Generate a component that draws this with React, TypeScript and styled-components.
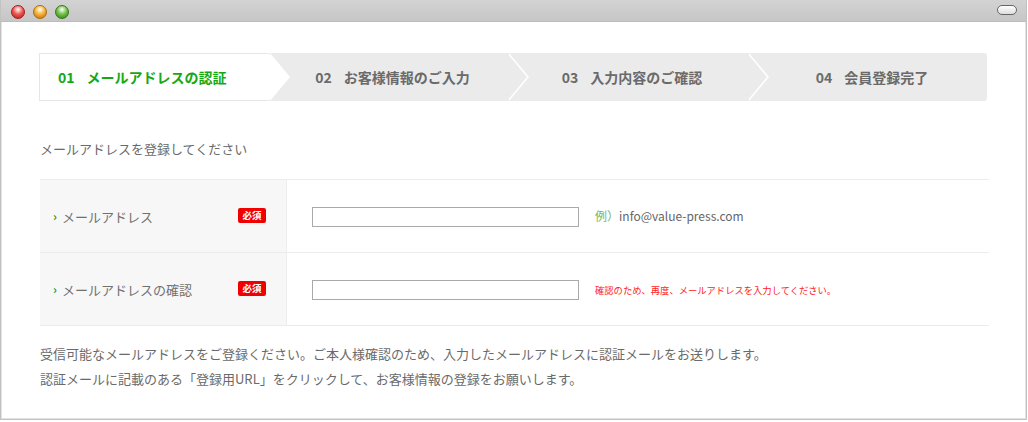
import React from "react";
import styled, { createGlobalStyle } from "styled-components";

const Global = createGlobalStyle`
  html, body { margin: 0; padding: 0; background: #fff; }
  body { font-family: "Noto Sans CJK JP", "Noto Sans", sans-serif; color: #666; }
  * { box-sizing: border-box; }
`;

const Window = styled.div`
  width: 1027px;
  height: 420px;
  border: 1px solid #c2c2c2;
  border-top: none;
  box-shadow: inset 1px 0 0 #e2e2e2, inset -1px 0 0 #e2e2e2, inset 0 -1px 0 #e2e2e2;
  display: flex;
  flex-direction: column;
  background: #fff;
`;

const TitleBar = styled.div`
  height: 22px;
  background: linear-gradient(#d3d3d3, #c6c6c6);
  display: flex;
  align-items: center;
  padding: 0 9px 0 10px;
  gap: 8px;
  border-bottom: 1px solid #bdbdbd;
`;

const Light = styled.span<{ $c: string; $d: string }>`
  width: 14px;
  height: 14px;
  border-radius: 50%;
  background: radial-gradient(circle at 50% 30%, #fff 0, ${(p) => p.$c} 45%, ${(p) => p.$d} 100%);
  border: 1px solid ${(p) => p.$d};
  margin-top: 2px;
`;

const Spacer = styled.div`
  flex: 1;
`;

const Pill = styled.span`
  width: 20px;
  height: 10px;
  border-radius: 5px;
  border: 1px solid #666;
  background: linear-gradient(#fff, #ddd);
  margin-top: -2px;
`;

const Content = styled.div`
  padding: 31px 38px 0 38px;
  display: flex;
  flex-direction: column;
`;

const Steps = styled.div`
  display: flex;
  height: 48px;
  background: #ebebeb;
  border-radius: 0 3px 3px 0;
  width: 948px;
`;

const Step = styled.div<{ $active?: boolean; $w: number; $last?: boolean }>`
  position: relative;
  width: ${(p) => p.$w}px;
  height: 48px;
  display: flex;
  align-items: center;
  justify-content: ${(p) => (p.$active ? "flex-start" : "center")};
  padding-left: ${(p) => (p.$active ? "18px" : "10px")};
  font-size: 14px;
  font-weight: bold;
  color: ${(p) => (p.$active ? "#14a914" : "#6a6a6a")};
  background: ${(p) => (p.$active ? "#fff" : "transparent")};
  border: ${(p) => (p.$active ? "1px solid #e6e6e6" : "none")};
  border-right: none;
  white-space: nowrap;

  &::before,
  &::after {
    content: "";
    display: ${(p) => (p.$last ? "none" : "block")};
    position: absolute;
    top: ${(p) => (p.$active ? "-1px" : "0")};
    height: 48px;
    width: 20px;
    clip-path: polygon(0 0, 100% 50%, 0 100%);
    z-index: 1;
  }
  &::before {
    left: calc(100% + 2px);
    background: #fff;
  }
  &::after {
    left: 100%;
    background: ${(p) => (p.$active ? "#fff" : "#ebebeb")};
  }
`;

const Num = styled.span`
  margin-right: 12px;
`;

const Heading = styled.h2`
  margin: 38px 0 0 1px;
  font-size: 13px;
  font-weight: normal;
  line-height: 20px;
  color: #6a6a6a;
`;

const Table = styled.div`
  margin-top: 20px;
  width: 949px;
  border-top: 1px solid #ececec;
  margin-left: 1px;
`;

const Row = styled.div`
  display: flex;
  height: 73px;
  border-bottom: 1px solid #ececec;
`;

const LabelCell = styled.div`
  width: 247px;
  background: #f7f7f7;
  border-right: 1px solid #ededed;
  display: flex;
  align-items: center;
  padding: 0 20px 0 13px;
  font-size: 13px;
  color: #707070;
`;

const Chev = styled.span`
  color: #1a9c1a;
  font-weight: bold;
  font-size: 12px;
  margin-right: 5px;
  margin-top: -1px;
`;

const LabelText = styled.span`
  flex: 1;
`;

const Badge = styled.span`
  background: #f00000;
  color: #fff;
  font-size: 9.5px;
  font-weight: bold;
  width: 28px;
  height: 15px;
  border-radius: 2px;
  display: flex;
  align-items: center;
  justify-content: center;
  margin-top: -2px;
`;

const FieldCell = styled.div`
  flex: 1;
  display: flex;
  align-items: center;
  padding-left: 25px;
  gap: 16px;
`;

const Input = styled.input`
  width: 267px;
  height: 20px;
  border: 1px solid #a9a9a9;
  background: #fff;
  outline: none;
  margin-top: 1px;
`;

const Example = styled.span`
  font-size: 12px;
  color: #666;
  margin-top: -1px;
`;

const Rei = styled.span`
  color: #7bb35a;
`;

const Warn = styled.span`
  font-size: 9.3px;
  color: #f22;
  margin-top: 1px;
`;

const Notes = styled.p`
  margin: 15px 0 0 1px;
  font-size: 13px;
  line-height: 25px;
  color: #6a6a6a;
`;

export default function App() {
  const steps = [
    { n: "01", t: "メールアドレスの認証", w: 229 },
    { n: "02", t: "お客様情報のご入力", w: 239 },
    { n: "03", t: "入力内容のご確認", w: 240 },
    { n: "04", t: "会員登録完了", w: 240 },
  ];
  return (
    <>
      <Global />
      <Window>
        <TitleBar>
          <Light $c="#ee5a52" $d="#a51d17" />
          <Light $c="#f6b53b" $d="#b06a0b" />
          <Light $c="#74c24a" $d="#2f7a16" />
          <Spacer />
          <Pill />
        </TitleBar>
        <Content>
          <Steps>
            {steps.map((s, i) => (
              <Step key={s.n} $active={i === 0} $w={s.w} $last={i === steps.length - 1}>
                <Num>{s.n}</Num>
                {s.t}
              </Step>
            ))}
          </Steps>
          <Heading>メールアドレスを登録してください</Heading>
          <Table>
            <Row>
              <LabelCell>
                <Chev>›</Chev>
                <LabelText>メールアドレス</LabelText>
                <Badge>必須</Badge>
              </LabelCell>
              <FieldCell>
                <Input type="text" />
                <Example>
                  <Rei>例）</Rei>info@value-press.com
                </Example>
              </FieldCell>
            </Row>
            <Row>
              <LabelCell>
                <Chev>›</Chev>
                <LabelText>メールアドレスの確認</LabelText>
                <Badge>必須</Badge>
              </LabelCell>
              <FieldCell>
                <Input type="text" />
                <Warn>確認のため、再度、メールアドレスを入力してください。</Warn>
              </FieldCell>
            </Row>
          </Table>
          <Notes>
            受信可能なメールアドレスをご登録ください。ご本人様確認のため、入力したメールアドレスに認証メールをお送りします。
            <br />
            認証メールに記載のある「登録用URL」をクリックして、お客様情報の登録をお願いします。
          </Notes>
        </Content>
      </Window>
    </>
  );
}
